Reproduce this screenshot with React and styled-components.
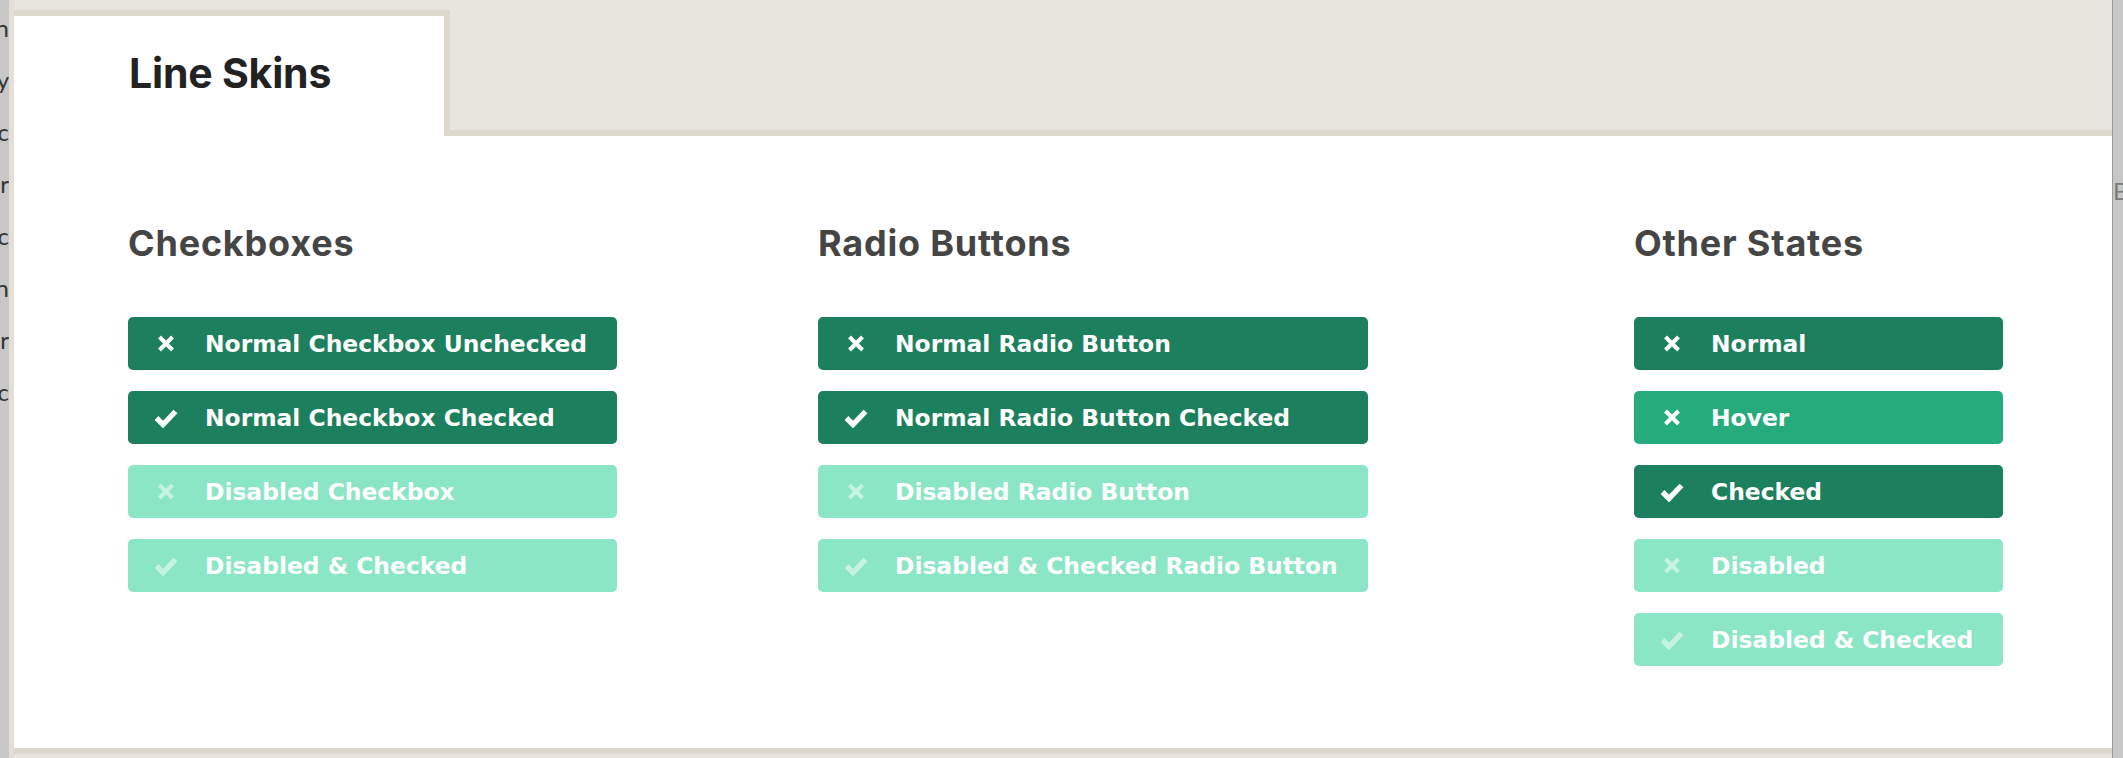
import React from "react";
import styled, { createGlobalStyle } from "styled-components";

const GlobalStyle = createGlobalStyle`
  html, body {
    margin: 0;
    padding: 0;
    background: #e8e4de;
  }
  body {
    font-family: Inter, "Liberation Sans", sans-serif;
  }
`;

const Page = styled.div`
  display: flex;
  width: 2123px;
  height: 758px;
  overflow: hidden;
`;

const SideStrip = styled.div`
  width: ${(p) => p.width}px;
  flex-shrink: 0;
  background: #c7c7c7;
  overflow: hidden;
  display: flex;
  justify-content: ${(p) => (p.right ? "flex-start" : "flex-end")};
  border-left: ${(p) => (p.right ? "1px solid #9a9a9a" : "none")};
`;

const StripText = styled.div`
  flex-shrink: 0;
  text-align: ${(p) => (p.right ? "left" : "right")};
  font-family: Lato, "Liberation Sans", sans-serif;
  font-size: 24px;
  line-height: 52px;
  padding-top: ${(p) => p.top}px;
  color: ${(p) => (p.right ? "#7a7a7a" : "#333")};
  white-space: nowrap;
`;

const Frame = styled.div`
  flex: 1;
  display: flex;
  flex-direction: column;
  border-left: 5px solid #e3dfd7;
`;

const Header = styled.div`
  display: flex;
  height: 136px;
  flex-shrink: 0;
  background: #e8e4de;
`;

const Tab = styled.div`
  box-sizing: border-box;
  width: 436px;
  margin-top: 10px;
  padding: 37px 0 0 115px;
  background: #fff;
  border-top: 6px solid #dcd8cc;
  border-right: 6px solid #dcd8cc;
`;

const Title = styled.h1`
  margin: 0;
  font-size: 41px;
  line-height: 1;
  font-weight: 700;
  letter-spacing: -0.2px;
  color: #222;
`;

const HeaderRest = styled.div`
  flex: 1;
  border-bottom: 6px solid #dcd8cc;
`;

const Body = styled.div`
  flex: 1;
  background: #fff;
  padding: 89px 0 0 114px;
  display: grid;
  grid-template-columns: 690px 816px auto;
  align-items: start;
  border-bottom: 6px solid #dcd8cc;
  margin-bottom: 4px;
`;

const Column = styled.div`
  display: flex;
  flex-direction: column;
`;

const Heading = styled.h2`
  margin: 0 0 56px;
  font-size: 36px;
  line-height: 1;
  font-weight: 700;
  letter-spacing: 0.8px;
  color: #454545;
`;

const List = styled.div`
  display: flex;
  flex-direction: column;
  gap: 21px;
  width: fit-content;
`;

const bg = {
  normal: "#1c7f5d",
  hover: "#26ab7c",
  disabled: "#8ae6c5",
};

const Item = styled.div`
  display: flex;
  align-items: center;
  height: 53px;
  padding: 0 30px 0 26px;
  border-radius: 5px;
  background: ${(p) => bg[p.variant]};
  color: #fff;
  font-family: "DejaVu Sans", Inter, sans-serif;
  font-size: 23.4px;
  font-weight: 700;
  white-space: nowrap;
`;

const IconBox = styled.span`
  display: flex;
  align-items: center;
  justify-content: center;
  width: 24px;
  height: 24px;
  margin-right: 27px;
  color: ${(p) => (p.faded ? "rgba(255,255,255,0.5)" : "#fff")};
`;

const CrossIcon = () => (
  <svg width="18" height="17" viewBox="0 0 18 17">
    <path d="M2.5 2 L15.5 15 M15.5 2 L2.5 15" stroke="currentColor" strokeWidth="4" fill="none" />
  </svg>
);

const CheckIcon = () => (
  <svg width="24" height="20" viewBox="0 0 24 20">
    <polyline points="2.5,10 9,16.5 21.5,3.5" stroke="currentColor" strokeWidth="5.4" fill="none" strokeLinejoin="miter" />
  </svg>
);

const Option = ({ label, icon, variant }) => (
  <Item variant={variant}>
    <IconBox faded={variant === "disabled"}>
      {icon === "check" ? <CheckIcon /> : <CrossIcon />}
    </IconBox>
    {label}
  </Item>
);

const sections = [
  {
    title: "Checkboxes",
    items: [
      { label: "Normal Checkbox Unchecked", icon: "x", variant: "normal" },
      { label: "Normal Checkbox Checked", icon: "check", variant: "normal" },
      { label: "Disabled Checkbox", icon: "x", variant: "disabled" },
      { label: "Disabled & Checked", icon: "check", variant: "disabled" },
    ],
  },
  {
    title: "Radio Buttons",
    items: [
      { label: "Normal Radio Button", icon: "x", variant: "normal" },
      { label: "Normal Radio Button Checked", icon: "check", variant: "normal" },
      { label: "Disabled Radio Button", icon: "x", variant: "disabled" },
      { label: "Disabled & Checked Radio Button", icon: "check", variant: "disabled" },
    ],
  },
  {
    title: "Other States",
    items: [
      { label: "Normal", icon: "x", variant: "normal" },
      { label: "Hover", icon: "x", variant: "hover" },
      { label: "Checked", icon: "check", variant: "normal" },
      { label: "Disabled", icon: "x", variant: "disabled" },
      { label: "Disabled & Checked", icon: "check", variant: "disabled" },
    ],
  },
];

const leftWords = ["n", "y", "ic", "r", "c", "n", "r", "c"];

export default function App() {
  return (
    <Page>
      <GlobalStyle />
      <SideStrip width={9}>
        <StripText top={2}>
          {leftWords.map((w, i) => (
            <div key={i}>{w}</div>
          ))}
        </StripText>
      </SideStrip>
      <Frame>
        <Header>
          <Tab>
            <Title>Line Skins</Title>
          </Tab>
          <HeaderRest />
        </Header>
        <Body>
          {sections.map((s) => (
            <Column key={s.title}>
              <Heading>{s.title}</Heading>
              <List>
                {s.items.map((it) => (
                  <Option key={it.label} {...it} />
                ))}
              </List>
            </Column>
          ))}
        </Body>
      </Frame>
      <SideStrip width={10} right>
        <StripText right top={165}>
          B
        </StripText>
      </SideStrip>
    </Page>
  );
}
